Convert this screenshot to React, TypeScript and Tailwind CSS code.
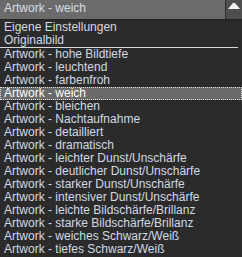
import React from 'react';

const items = [
  'Eigene Einstellungen',
  'Originalbild',
  'Artwork - hohe Bildtiefe',
  'Artwork - leuchtend',
  'Artwork - farbenfroh',
  'Artwork - weich',
  'Artwork - bleichen',
  'Artwork - Nachtaufnahme',
  'Artwork - detailliert',
  'Artwork - dramatisch',
  'Artwork - leichter Dunst/Unschärfe',
  'Artwork - deutlicher Dunst/Unschärfe',
  'Artwork - starker Dunst/Unschärfe',
  'Artwork - intensiver Dunst/Unschärfe',
  'Artwork - leichte Bildschärfe/Brillanz',
  'Artwork - starke Bildschärfe/Brillanz',
  'Artwork - weiches Schwarz/Weiß',
  'Artwork - tiefes Schwarz/Weiß',
];

const selected = 'Artwork - weich';

export default function App() {
  return (
    <div className="w-[242px] h-[257px] overflow-hidden bg-[#2b2b2b] font-['Liberation_Sans',sans-serif] text-[12px]">
      <div className="flex h-[20px] border-b border-[#222]">
        <div className="flex-1 bg-[#6b6b6b] pl-[4px] leading-[16px] text-[#d8dee6]">{selected}</div>
        <div className="w-[17px] border-l border-[#2e2e2e] bg-[#4e4e4e] flex justify-center pt-[2px]">
          <svg width="12" height="7" viewBox="0 0 12 7">
            <path d="M0 7 L4.5 1.5 Q6 0 7.5 1.5 L12 7 Z" fill="#f2f2f2" />
          </svg>
        </div>
      </div>
      <div className="pt-[1px]">
        {items.map((item, i) => (
          <React.Fragment key={item}>
            <div
              className={
                item === selected
                  ? 'h-[13px] leading-[11px] pl-[3px] bg-[#6a6a6a] text-white border border-dotted border-[#e0e0e0]'
                  : 'h-[13px] leading-[13px] pl-[4px] text-[#d2dae4]'
              }
            >
              {item}
            </div>
            {i === 1 && <div className="h-px mr-[4px] bg-[#d8d8d8]" />}
          </React.Fragment>
        ))}
      </div>
    </div>
  );
}
